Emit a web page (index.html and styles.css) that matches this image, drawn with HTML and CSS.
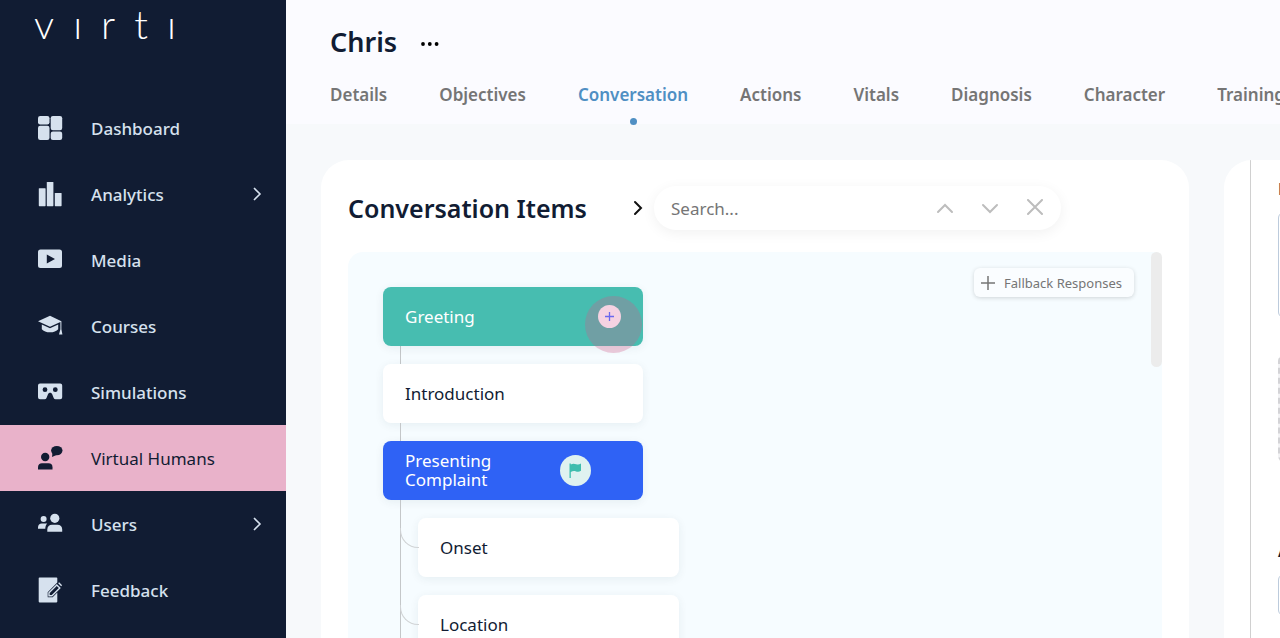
FILE: index.html
```html
<!DOCTYPE html>
<html lang="en">
<head>
<meta charset="utf-8">
<meta name="viewport" content="width=device-width, initial-scale=1">
<title>Chris – Conversation</title>
<link rel="stylesheet" href="styles.css">
</head>
<body>
<div class="app">
  <aside class="sidebar">
    <a class="logo" href="#" aria-label="Virti"><span>v</span><span>ı</span><span>r</span><span>t</span><span>ı</span></a>
    <nav class="menu">
      <a class="menu-item" href="#">
        <svg class="menu-icon" viewBox="0 0 26 26"><rect x="1" y="1" width="11.500" height="8.500" rx="2.200"/><rect x="1" y="10.700" width="11.500" height="14.300" rx="2.200"/><rect x="13.700" y="1" width="11.500" height="14.300" rx="2.200"/><rect x="13.700" y="16.500" width="11.500" height="8.500" rx="2.200"/></svg>
        <span>Dashboard</span>
      </a>
      <a class="menu-item" href="#">
        <svg class="menu-icon" viewBox="0 0 26 26"><rect x="1.800" y="7.200" width="6.800" height="18" rx=".6"/><rect x="9.800" y="1" width="6.600" height="24.200" rx=".6"/><rect x="17.800" y="12" width="6.800" height="13.200" rx=".6"/></svg>
        <span>Analytics</span>
        <svg class="menu-arrow" viewBox="0 0 10 16"><path d="M2 2l6 6-6 6"/></svg>
      </a>
      <a class="menu-item" href="#">
        <svg class="menu-icon" viewBox="0 0 26 26"><path fill-rule="evenodd" d="M3.500 2.500h19A2.500 2.500 0 0 1 25 5v13.500a2.500 2.500 0 0 1-2.500 2.500h-19A2.500 2.500 0 0 1 1 18.500V5a2.500 2.500 0 0 1 2.500-2.500zM9.800 7.400v9l8.200-4.500z"/></svg>
        <span>Media</span>
      </a>
      <a class="menu-item" href="#">
        <svg class="menu-icon" viewBox="0 0 26 26"><path d="M13 2.800L1 8.300l12 5.500 10.400-4.700v7.200l-1.400 5.200h3.400l-1-5.200V8.300z"/><path d="M4.800 11.600v4.600c1.600 2 4.700 3.100 8.200 3.100s6.600-1.100 8.200-3.100v-4.600L13 15.300z"/></svg>
        <span>Courses</span>
      </a>
      <a class="menu-item" href="#">
        <svg class="menu-icon" viewBox="0 0 26 26"><path fill-rule="evenodd" d="M3 4.500h20.200a2 2 0 0 1 2 2v11.700a2 2 0 0 1-2 2h-4.600a2 2 0 0 1-1.900-1.300l-1.500-3.600c-.8-2-3.400-2-4.200 0l-1.500 3.600a2 2 0 0 1-1.900 1.300H3a2 2 0 0 1-2-2V6.500a2 2 0 0 1 2-2zM8 8.300a2.400 2.400 0 1 0 0 4.800 2.400 2.400 0 0 0 0-4.800zM18.300 8.300a2.400 2.400 0 1 0 0 4.800 2.400 2.400 0 0 0 0-4.800z"/></svg>
        <span>Simulations</span>
      </a>
      <a class="menu-item active" href="#" aria-current="page">
        <svg class="menu-icon" viewBox="0 0 26 26"><circle cx="8.200" cy="12" r="4.200"/><path d="M1 24.500v-2.300c0-2.600 1.600-4 4-4h6.500c2.600 0 4 1.400 4 4v2.300z"/><ellipse cx="19.800" cy="5.600" rx="5.700" ry="4.700"/><path d="M15.500 7.500l-.5 4.500 4.500-2z"/></svg>
        <span>Virtual Humans</span>
      </a>
      <a class="menu-item" href="#">
        <svg class="menu-icon" viewBox="0 0 26 26"><circle cx="17.800" cy="7.300" r="4.600"/><path d="M10.300 20.800v-2.300c0-3 2-4.700 4.700-4.700h5.500c2.800 0 4.700 1.700 4.700 4.700v2.300z"/><circle cx="6.600" cy="8" r="3"/><path d="M1 17.800v-1.300c0-2.500 1.600-3.900 3.800-3.900h5.400c-1.200 1.400-1.900 3-1.900 5.200z"/></svg>
        <span>Users</span>
        <svg class="menu-arrow" viewBox="0 0 10 16"><path d="M2 2l6 6-6 6"/></svg>
      </a>
      <a class="menu-item" href="#">
        <svg class="menu-icon" viewBox="0 0 26 26"><path d="M2.500.5h17a.8.800 0 0 1 .8.800v4.200l-9.600 9.700v5h5l4.600-4.600v9a.8.800 0 0 1-.8.800h-17a.8.800 0 0 1-.8-.8V1.300a.8.800 0 0 1 .8-.8z"/><path class="pencil" d="M12 18.800v-3l7.800-7.800 3 3-7.800 7.800z"/><path d="M21.100 6.300l1-1 3 3-1 1z"/></svg>
        <span>Feedback</span>
      </a>
    </nav>
  </aside>

  <main class="main">
    <header class="header">
      <div class="title-row">
        <h1>Chris</h1>
        <button class="more" type="button" aria-label="More options"><svg viewBox="0 0 18 4"><circle cx="2" cy="2" r="1.900"/><circle cx="8.800" cy="2" r="1.900"/><circle cx="15.600" cy="2" r="1.900"/></svg></button>
      </div>
      <nav class="tabs">
        <a href="#">Details</a>
        <a href="#">Objectives</a>
        <a class="current" href="#" aria-current="page">Conversation</a>
        <a href="#">Actions</a>
        <a href="#">Vitals</a>
        <a href="#">Diagnosis</a>
        <a href="#">Character</a>
        <a href="#">Training</a>
      </nav>
    </header>

    <div class="content">
      <section class="card items">
        <div class="items-head">
          <h2>Conversation Items</h2>
          <button class="expand" type="button" aria-label="Toggle search"><svg viewBox="0 0 10 16"><path d="M2 2l6 6-6 6"/></svg></button>
          <form class="search">
            <input type="text" placeholder="Search..." aria-label="Search">
            <button type="button" aria-label="Previous"><svg viewBox="0 0 18 18"><path d="M2 13l7-7 7 7"/></svg></button>
            <button type="button" aria-label="Next"><svg viewBox="0 0 18 18"><path d="M2 6l7 7 7-7"/></svg></button>
            <button type="button" aria-label="Clear"><svg viewBox="0 0 18 18"><path d="M2 1l14 14M16 1L2 15"/></svg></button>
          </form>
        </div>
        <div class="canvas">
          <ul class="tree">
            <li><div class="node teal"><span>Greeting</span><button class="add" type="button" aria-label="Add item"><svg viewBox="0 0 11 11"><path d="M5.500 1v9M1 5.500h9"/></svg></button></div></li>
            <li><div class="node"><span>Introduction</span></div></li>
            <li><div class="node blue"><span>Presenting Complaint</span><span class="flag"><svg viewBox="0 0 13 15"><path d="M.5.500h1.300v1c2-1.200 3.800-.8 5.400-.3 1.600.4 3 .5 4.800-.7v7.300c-1.800 1.200-3.500 1-5 .6-1.700-.5-3.200-.6-5.200.7V15H.5z"/></svg></span></div></li>
            <li class="child"><div class="node"><span>Onset</span></div></li>
            <li class="child"><div class="node"><span>Location</span></div></li>
          </ul>
          <button class="fallback" type="button"><svg viewBox="0 0 14 14"><path d="M7 0v14M0 7h14"/></svg>Fallback Responses</button>
          <div class="scroll-thumb"></div>
        </div>
      </section>
      <aside class="card details">
        <div class="details-body">
          <h3>Name</h3>
          <div class="box"></div>
          <div class="box drop"></div>
          <h3>Audio</h3>
          <div class="box small"></div>
        </div>
      </aside>
    </div>
  </main>
</div>
</body>
</html>
```
FILE: styles.css
```css
* { box-sizing: border-box; }

body {
  margin: 0;
  height: 100vh;
  overflow: hidden;
  font-family: "Noto Sans", "Open Sans", sans-serif;
  font-size: 17px;
  color: #111c33;
  background: #f7f9fb;
}

h1, h2, h3 { margin: 0; font-weight: 600; }
a { color: inherit; text-decoration: none; }
button {
  padding: 0;
  border: 0;
  background: none;
  font: inherit;
  color: inherit;
}
svg { display: block; }

.app { display: flex; height: 100%; }

/* Sidebar */
.sidebar {
  flex: 0 0 286px;
  background: #111c33;
  color: #d6e1ee;
}
.logo {
  display: flex;
  justify-content: space-between;
  width: 142px;
  height: 95px;
  margin-left: 34px;
  font-family: Lato, sans-serif;
  font-size: 40px;
  font-weight: 300;
  line-height: 48px;
  color: #fff;
}
.menu-item {
  display: flex;
  align-items: center;
  height: 66px;
  padding: 0 24px 0 37px;
  font-weight: 500;
}
.menu-item span { flex: 1; }
.menu-icon {
  width: 26px;
  height: 26px;
  margin-right: 28px;
  fill: currentColor;
}
.menu-arrow { width: 10px; height: 16px; }
.menu-arrow path {
  fill: none;
  stroke: currentColor;
  stroke-width: 1.6;
}
.pencil {
  fill: none;
  stroke: currentColor;
  stroke-width: 1.4;
}
.active { background: #e9b2ca; color: #111c33; font-weight: 400; }

/* Header */
.main {
  display: flex;
  flex-direction: column;
  flex: 1;
  min-width: 0;
}
.header {
  height: 124px;
  padding: 23px 0 0 44px;
  background: #fbfbff;
}
.title-row {
  display: flex;
  align-items: center;
  gap: 24px;
}
h1 { font-size: 27px; line-height: 38px; }
.more svg { width: 18px; height: 4px; fill: #000; margin-top: 4px; }
.tabs {
  display: flex;
  gap: 52px;
  margin-top: 22px;
  font-weight: 600;
  line-height: 24px;
  color: #757575;
  white-space: nowrap;
}
.current {
  display: flex;
  flex-direction: column;
  align-items: center;
  gap: 11px;
  color: #4f8fc3;
}
.current::after {
  content: "";
  width: 7px;
  height: 7px;
  border-radius: 50%;
  background: #4f8fc3;
}

/* Cards */
.content {
  display: grid;
  grid-template-columns: minmax(0, 1fr) 56px;
  gap: 35px;
  flex: 1;
  min-height: 0;
  padding: 36px 0 0 35px;
}
.card {
  min-height: 0;
  background: #fff;
  border-radius: 28px 28px 0 0;
  overflow: hidden;
}
.items {
  display: flex;
  flex-direction: column;
  padding: 26px 27px 0;
}
.items-head { display: flex; align-items: center; }
h2 { width: 285px; font-size: 25px; line-height: 44px; }
.expand { width: 21px; }
.expand svg, .search svg {
  fill: none;
  stroke: #bdbdbd;
  stroke-width: 2;
  stroke-linecap: round;
}
.expand svg { width: 10px; height: 16px; stroke: #111; }
.search {
  display: flex;
  align-items: center;
  gap: 27px;
  width: 407px;
  height: 44px;
  padding: 0 17px;
  border-radius: 22px;
  box-shadow: 0 3px 14px rgba(0, 0, 0, .06);
}
.search input {
  flex: 1;
  min-width: 0;
  padding: 0;
  border: 0;
  outline: 0;
  background: none;
  font: inherit;
}
.search input::placeholder { color: #757575; opacity: 1; }
.search svg { width: 18px; height: 18px; }

/* Conversation tree */
.canvas {
  display: flex;
  align-items: flex-start;
  flex: 1;
  margin-top: 22px;
  background: #f6fcff;
  border-radius: 15px 6px 0 0;
}
.tree {
  display: flex;
  flex-direction: column;
  gap: 18px;
  flex: 1;
  margin: 0;
  padding: 35px 0 0 35px;
  list-style: none;
}
.tree li { position: relative; width: 260px; }
.tree li::before {
  content: "";
  position: absolute;
  top: 59px;
  left: 17px;
  width: 1px;
  height: 18px;
  background: #c4c7c9;
}
.tree .child { width: 261px; margin-left: 35px; }
.tree .child::before {
  top: -18px;
  left: -18px;
  height: 77px;
}
.tree .child::after {
  content: "";
  position: absolute;
  top: 10px;
  left: -18px;
  width: 18px;
  height: 19px;
  border: solid #d0d3d5;
  border-width: 0 0 1px 1px;
  border-bottom-left-radius: 18px;
}
.node {
  display: flex;
  align-items: center;
  justify-content: space-between;
  height: 59px;
  padding: 0 22px 1px;
  border-radius: 8px;
  background: #fff;
  line-height: 19px;
  box-shadow: 0 2px 10px rgba(20, 50, 70, .07);
}
.teal {
  position: relative;
  z-index: 1;
  background: #47bdb0;
  color: #fff;
}
.blue { background: #2f62f5; color: #fff; justify-content: flex-start; }
.blue span:first-child { width: 155px; padding-right: 50px; }
.add {
  position: relative;
  display: grid;
  place-items: center;
  width: 23px;
  height: 23px;
  border-radius: 50%;
  background: #f5d2e2;
}
.add::before {
  content: "";
  position: absolute;
  z-index: -1;
  top: -9px;
  left: -13px;
  width: 57px;
  height: 57px;
  border-radius: 50%;
  background: rgba(210, 88, 135, .3);
}
.add svg {
  width: 11px;
  height: 11px;
  fill: none;
  stroke: #6a68ee;
  stroke-width: 1.3;
}
.flag {
  display: grid;
  place-items: center;
  width: 31px;
  height: 31px;
  border-radius: 50%;
  background: #dff2f0;
}
.flag svg { width: 13px; height: 15px; fill: #3fbdae; }
.fallback {
  display: flex;
  align-items: center;
  gap: 9px;
  height: 29px;
  margin: 16px 17px 0 0;
  padding: 0 12px 0 7px;
  border-radius: 6px;
  background: #fafdff;
  font-size: 13px;
  color: #757575;
  box-shadow: 0 1px 4px rgba(0, 0, 0, .16);
}
.fallback svg { width: 14px; height: 14px; stroke: #757575; stroke-width: 1.5; }
.scroll-thumb {
  width: 11px;
  height: 115px;
  border-radius: 6px;
  background: #ececec;
}

/* Details panel */
.details { padding-left: 26px; border-top-right-radius: 0; }
.details-body {
  width: 400px;
  height: 100%;
  padding: 17px 27px 0;
  border-left: 1px solid #d0d0d0;
}
h3 { font-size: 16px; line-height: 24px; }
.box {
  height: 106px;
  margin-top: 11px;
  border: 1px solid #bccbdc;
  border-radius: 6px;
}
.drop {
  height: 107px;
  margin: 37px 0 77px;
  border: 2px dashed #d3d3d6;
  background: #f3f3f5;
}
.small { height: 42px; }
```
